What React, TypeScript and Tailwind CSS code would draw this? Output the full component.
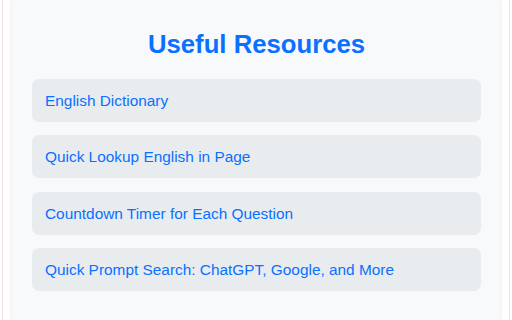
import React from 'react';

const resources = [
  'English Dictionary',
  'Quick Lookup English in Page',
  'Countdown Timer for Each Question',
  'Quick Prompt Search: ChatGPT, Google, and More',
];

export default function App() {
  return (
    <div className="h-[320px] w-[512px] overflow-hidden bg-white" style={{ fontFamily: '"Liberation Sans", Arial, sans-serif' }}>
      <div className="mx-[2px] h-full border-x border-[#f1dfe6] px-[9px]">
        <div className="h-full bg-[#f8f9fb] pl-[20px] pr-[19px] pt-[29px] shadow-[0_0_4px_rgba(0,0,0,0.12)]">
          <h2 className="mb-[19px] text-center text-[25.7px] leading-[31px] font-bold text-[#0a70ff]">Useful Resources</h2>
          <div className="flex flex-col gap-[13.3px]">
            {resources.map(r => (
              <a
                key={r}
                href="#"
                className="flex h-[43px] items-center rounded-[7px] bg-[#e9ecef] px-[13px] text-[15.4px] text-[#0a70ff]"
              >
                {r}
              </a>
            ))}
          </div>
        </div>
      </div>
    </div>
  );
}
